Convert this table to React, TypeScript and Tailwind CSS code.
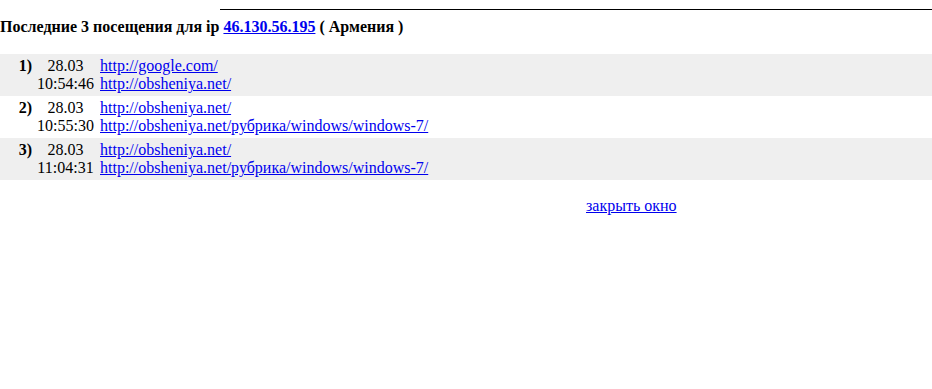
import React from "react"

const visits = [
  { n: "1)", date: "28.03", time: "10:54:46", from: "http://google.com/", to: "http://obsheniya.net/" },
  { n: "2)", date: "28.03", time: "10:55:30", from: "http://obsheniya.net/", to: "http://obsheniya.net/рубрика/windows/windows-7/" },
  { n: "3)", date: "28.03", time: "11:04:31", from: "http://obsheniya.net/", to: "http://obsheniya.net/рубрика/windows/windows-7/" },
]

export default function App() {
  return (
    <div className="min-h-[389px] bg-white text-black text-[16px] leading-[18px] font-['Liberation_Serif','Times_New_Roman',serif]">
      <div className="pt-[9px]">
        <div className="ml-[220px] h-px bg-black" />
      </div>

      <div className="mt-[8px] font-bold">
        Последние 3 посещения для ip{" "}
        <a href="#" className="text-[#0000ee] underline">46.130.56.195</a>{" "}
        ( Армения )
      </div>

      <div className="mt-[18px]">
        {visits.map((v, i) => (
          <div
            key={v.n}
            className={`grid grid-cols-[34px_63px_1fr] py-[3px] ${i % 2 === 0 ? "bg-[#efefef]" : "bg-white"}`}
          >
            <div className="text-right pr-[2px] font-bold">{v.n}</div>
            <div className="text-center">
              <div>{v.date}</div>
              <div>{v.time}</div>
            </div>
            <div className="pl-[3px]">
              <div><a href="#" className="text-[#0000ee] underline">{v.from}</a></div>
              <div><a href="#" className="text-[#0000ee] underline">{v.to}</a></div>
            </div>
          </div>
        ))}
      </div>

      <div className="mt-[17px] ml-[586px]">
        <a href="#" className="text-[#0000ee] underline">закрыть окно</a>
      </div>
    </div>
  )
}
